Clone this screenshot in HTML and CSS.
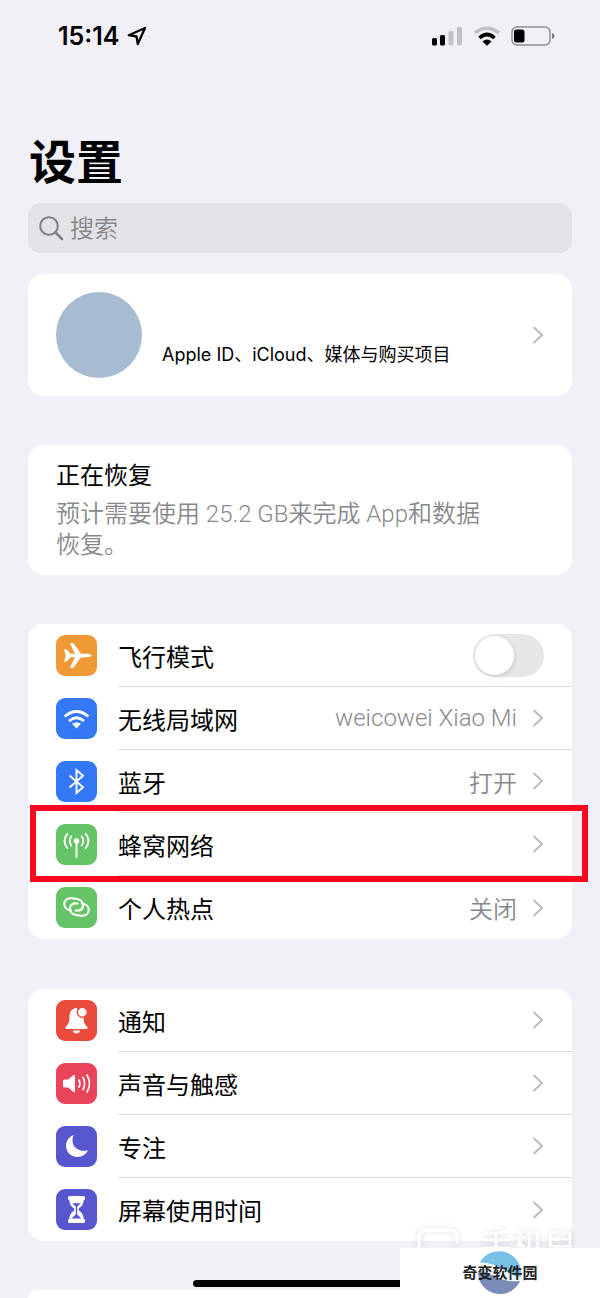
FILE: index.html
```html
<!DOCTYPE html>
<html lang="zh-CN">
<head>
    <meta charset="UTF-8">
    <meta name="viewport" content="width=device-width, initial-scale=1.0">
    <title>设置</title>
    <link rel="stylesheet" href="styles.css">
</head>
<body>
    <svg class="defs" width="0" height="0" aria-hidden="true">
        <symbol id="chevron" viewBox="0 0 12 20">
            <path d="M1.5 2 10 10 1.5 18" fill="none" stroke="currentColor" stroke-width="2"/>
        </symbol>
    </svg>

    <header class="status-bar">
        <span class="time">15:14</span>
        <svg class="location" width="20" height="20" viewBox="0 0 20 20" aria-hidden="true">
            <path d="M18 2 1.8 9.2 9.5 10.5 10.8 18Z" fill="none" stroke="#000" stroke-width="2.3" stroke-linejoin="round"/>
        </svg>
        <div class="indicators">
            <svg width="32" height="20" viewBox="0 0 32 20" aria-hidden="true">
                <rect x="1" y="12" width="5" height="7.5" rx="1.5"/>
                <rect x="9" y="9" width="5" height="10.5" rx="1.5"/>
                <rect x="17.5" y="5" width="5" height="14.5" rx="1.5" fill="#c0c0c5"/>
                <rect x="26" y="1" width="5" height="18.5" rx="1.5" fill="#c0c0c5"/>
            </svg>
            <svg width="28" height="20" viewBox="0 0 28 20" aria-hidden="true">
                <g fill="none" stroke-width="3.6">
                    <path d="M2 7Q14-2.5 26 7" stroke="#c0c0c5"/>
                    <path d="M6.5 12Q14 5 21.5 12" stroke="#000"/>
                </g>
                <path d="M9.5 15.5Q14 11.5 18.5 15.5L14 19.8Z"/>
            </svg>
            <svg width="44" height="20" viewBox="0 0 44 20" aria-hidden="true">
                <rect x="1" y="1" width="38" height="18" rx="5" fill="none" stroke="#8e8e93" stroke-width="1.5"/>
                <rect x="3" y="3.5" width="10.5" height="13" rx="2.5"/>
                <path d="M41 7Q43.5 8 43.5 10T41 13Z" fill="#77777c"/>
            </svg>
        </div>
    </header>

    <main class="settings">
        <h1>设置</h1>

        <label class="search">
            <svg width="26" height="26" viewBox="0 0 26 26" fill="none" stroke="#7f7f84" aria-hidden="true">
                <circle cx="11" cy="11" r="8.8" stroke-width="2"/>
                <path d="M17.5 17.5 24 24" stroke-width="2.6" stroke-linecap="round"/>
            </svg>
            <input type="search" placeholder="搜索" aria-label="搜索">
        </label>

        <a class="card profile" href="#apple-id">
            <span class="avatar"></span>
            <span class="profile-text">Apple ID、iCloud、媒体与购买项目</span>
            <svg class="chevron"><use href="#chevron"/></svg>
        </a>

        <section class="card restore">
            <h2>正在恢复</h2>
            <p>预计需要使用 25.2 GB来完成 App和数据恢复。</p>
        </section>

        <ul class="card list">
            <li>
                <label class="row">
                    <svg class="icon orange" viewBox="0 0 41 41" aria-hidden="true">
                        <path d="M8 14.5H10.6L14.5 18.8H19L14.3 9.2Q14 8 15.2 8H17.3L25 18.8H31.5C34 18.8 35.5 19.8 35.5 20.5S34 22.2 31.5 22.2H25L17.3 33H15.2Q14 33 14.3 31.8L19 22.2H14.5L10.6 26.5H8L9.7 20.5Z"/>
                    </svg>
                    <span class="content">
                        <span class="name">飞行模式</span>
                        <input type="checkbox" class="switch" role="switch">
                    </span>
                </label>
            </li>
            <li>
                <a class="row" href="#wifi">
                    <svg class="icon blue" viewBox="0 0 41 41" aria-hidden="true">
                        <g fill="none" stroke="#fff" stroke-width="2.8">
                            <path d="M8.7 18.5Q20.5 8.5 32.3 18.5"/>
                            <path d="M13 23Q20.5 16.5 28 23"/>
                        </g>
                        <path d="M16 25.8Q20.5 22.5 25 25.8L20.5 30.5Z"/>
                    </svg>
                    <span class="content">
                        <span class="name">无线局域网</span>
                        <span class="value">weicowei Xiao Mi</span>
                        <svg class="chevron"><use href="#chevron"/></svg>
                    </span>
                </a>
            </li>
            <li>
                <a class="row" href="#bluetooth">
                    <svg class="icon blue" viewBox="0 0 41 41" aria-hidden="true">
                        <path d="M13.5 14.5 27 26.2 20.5 32V9L27 14.8 13.5 26.5" fill="none" stroke="#fff" stroke-width="1.9"/>
                    </svg>
                    <span class="content">
                        <span class="name">蓝牙</span>
                        <span class="value">打开</span>
                        <svg class="chevron"><use href="#chevron"/></svg>
                    </span>
                </a>
            </li>
            <li class="highlighted">
                <a class="row" href="#cellular">
                    <svg class="icon green" viewBox="0 0 41 41" aria-hidden="true">
                        <circle cx="20.5" cy="17" r="2.8"/>
                        <g fill="none" stroke="#fff" stroke-width="1.9" stroke-linecap="round">
                            <path d="M20.5 18V33"/>
                            <path d="M15.3 12.3Q12.3 16.8 15.3 21.5M25.7 12.3Q28.7 16.8 25.7 21.5"/>
                            <path d="M11.3 9.8Q5.8 16.8 11.3 24M29.7 9.8Q35.2 16.8 29.7 24"/>
                        </g>
                    </svg>
                    <span class="content">
                        <span class="name">蜂窝网络</span>
                        <svg class="chevron"><use href="#chevron"/></svg>
                    </span>
                </a>
            </li>
            <li>
                <a class="row" href="#hotspot">
                    <svg class="icon green" viewBox="0 0 41 41" aria-hidden="true">
                        <g fill="none" stroke="#fff" stroke-width="2.1" stroke-linecap="round">
                            <path d="M15 23.5C10.500 23 8 20 8.300 16.500 8.700 12.800 12 11 16 11.300L21 12C25 12.800 27.500 15.500 27 19 26.500 22.500 23.500 24 19.500 23.500"/>
                            <path d="M26 16.500C30.500 17 33 20 32.700 23.500 32.300 27.200 29 29 25 28.700L20 28C16 27.200 13.500 24.500 14 21 14.500 17.500 17.500 16 21.500 16.500"/>
                        </g>
                    </svg>
                    <span class="content">
                        <span class="name">个人热点</span>
                        <span class="value">关闭</span>
                        <svg class="chevron"><use href="#chevron"/></svg>
                    </span>
                </a>
            </li>
        </ul>

        <ul class="card list">
            <li>
                <a class="row" href="#notifications">
                    <svg class="icon red" viewBox="0 0 41 41" aria-hidden="true">
                        <path d="M20.5 8C15.5 8.5 13.5 12 13.5 16.5 13.5 22.5 12 24.5 10 26.5 9 27.6 9.3 29 10.8 29H30.2C31.7 29 32 27.6 31 26.5 29 24.5 27.5 22.5 27.5 16.5Z"/>
                        <path d="M16.8 30.5H24.2Q23.4 33.5 20.5 33.5T16.8 30.5Z"/>
                        <circle cx="26.3" cy="12.3" r="5" stroke="#eb4b3d" stroke-width="1.4"/>
                    </svg>
                    <span class="content">
                        <span class="name">通知</span>
                        <svg class="chevron"><use href="#chevron"/></svg>
                    </span>
                </a>
            </li>
            <li>
                <a class="row" href="#sounds">
                    <svg class="icon pink" viewBox="0 0 41 41" aria-hidden="true">
                        <path d="M8.5 16.5H12.2L17.5 12Q19 11.2 19 13V28Q19 29.8 17.5 29L12.2 24.5H8.5Q7 24.5 7 23V18Q7 16.5 8.5 16.5Z"/>
                        <g fill="none" stroke="#fff" stroke-width="1.7" stroke-linecap="round">
                            <path d="M23 17Q25 20.5 23 24"/>
                            <path d="M27 14.5Q30.2 20.5 27 26.5"/>
                            <path d="M31 12Q36 20.5 31 29"/>
                        </g>
                    </svg>
                    <span class="content">
                        <span class="name">声音与触感</span>
                        <svg class="chevron"><use href="#chevron"/></svg>
                    </span>
                </a>
            </li>
            <li>
                <a class="row" href="#focus">
                    <svg class="icon purple" viewBox="0 0 41 41" aria-hidden="true">
                        <path d="M17.5 9C13 11 10 15 10 19.8 10 26 15 31 21.3 31 26 31 30 28.5 32 24.3 24 26.5 16.5 22 16.5 14.5 16.5 12.5 16.8 10.7 17.5 9Z"/>
                    </svg>
                    <span class="content">
                        <span class="name">专注</span>
                        <svg class="chevron"><use href="#chevron"/></svg>
                    </span>
                </a>
            </li>
            <li>
                <a class="row" href="#screen-time">
                    <svg class="icon purple" viewBox="0 0 41 41" aria-hidden="true">
                        <rect x="12" y="7" width="17" height="4" rx="1.5"/>
                        <rect x="12" y="30" width="17" height="4" rx="1.5"/>
                        <path d="M13.3 10H27.7C27.7 15 26 17 23.5 19 22.3 20 22.3 21 23.5 22 26 24 27.7 26 27.7 31H13.3C13.3 26 15 24 17.5 22 18.7 21 18.7 20 17.5 19 15 17 13.3 15 13.3 10Z"/>
                        <path d="M16 14.2H25L21.2 17.5V25.5L25.5 29.5H15.5L19.8 25.5V17.5Z" fill="#5856ce"/>
                    </svg>
                    <span class="content">
                        <span class="name">屏幕使用时间</span>
                        <svg class="chevron"><use href="#chevron"/></svg>
                    </span>
                </a>
            </li>
        </ul>

        <div class="card next-group"></div>
    </main>

    <div class="home-indicator"></div>

    <div class="watermark">
        <svg width="44" height="44" viewBox="0 0 44 44" aria-hidden="true">
            <path d="M3 44V10Q3 2 11 2H33Q41 2 41 10V15" fill="none" stroke="#fff" stroke-width="3"/>
        </svg>
        <span>手机兒</span>
    </div>

    <footer class="site-badge">
        <svg width="46" height="46" viewBox="0 0 46 48" aria-hidden="true">
            <path d="M2 13A23 23 0 0 1 45 23V30C32 26 22 13 2 13Z" fill="#78c0e6"/>
            <path d="M0 22C14 22 24 36 44 32A23 23 0 0 1 1 30Z" fill="#7a8cb8"/>
            <path d="M0 19C16 20 26 33 45 29" fill="none" stroke="#e4f3fa" stroke-width="3"/>
        </svg>
        <span>奇变软件园</span>
    </footer>
</body>
</html>
```
FILE: styles.css
```css
* {
    box-sizing: border-box;
}
body {
    display: flex;
    flex-direction: column;
    margin: 0;
    height: 100vh;
    overflow: hidden;
    background-color: #f1f0f6;
    color: #000;
    font-family: Inter, "Noto Sans CJK SC", sans-serif;
    font-size: 24px;
}
a {
    color: inherit;
    text-decoration: none;
}
.defs {
    position: absolute;
}

/* status bar */
.status-bar {
    display: flex;
    align-items: center;
    height: 72px;
    padding: 0 45px 0 58px;
    flex-shrink: 0;
}
.time {
    font-size: 25px;
    font-weight: 600;
}
.location {
    margin-left: 7px;
}
.indicators {
    display: flex;
    gap: 10px;
    margin-left: auto;
}

.settings {
    display: flex;
    flex-direction: column;
    flex: 1;
    padding: 0 28px;
}
h1 {
    margin: 62px 0 13px 1px;
    font-size: 47px;
    line-height: 56px;
    font-weight: 700;
}

.search {
    display: flex;
    align-items: center;
    gap: 6px;
    height: 50px;
    padding: 0 10px;
    border-radius: 13px;
    background-color: #e3e2e7;
    flex-shrink: 0;
}
.search input {
    flex: 1;
    min-width: 0;
    padding: 0;
    border: none;
    outline: none;
    background: none;
    font: inherit;
    font-weight: 350;
}
.search input::placeholder {
    color: #86868b;
}

.card {
    margin: 0 0 49px;
    border-radius: 16px;
    background-color: #fff;
    flex-shrink: 0;
}
.chevron {
    width: 12px;
    height: 20px;
    color: #bcbcc0;
    flex-shrink: 0;
}

.profile {
    display: flex;
    align-items: center;
    gap: 20px;
    margin-top: 21px;
    padding: 18px 28px;
}
.avatar {
    width: 86px;
    height: 86px;
    border-radius: 50%;
    background-color: #a7bbd1;
}
.profile-text {
    flex: 1;
    padding-top: 36px;
    font-size: 18px;
}

.restore {
    padding: 14px 76px 14px 28px;
}
.restore h2 {
    margin: 0 0 6px;
    font-size: 24px;
    line-height: 34px;
    font-weight: 400;
}
.restore p {
    margin: 0;
    color: #88888c;
    font-family: Roboto, "Noto Sans CJK SC", sans-serif;
    font-weight: 350;
    line-height: 31px;
}

.list {
    padding: 0;
    list-style: none;
}
.list + .list {
    margin-top: 1px;
}
.row {
    display: flex;
    align-items: center;
    gap: 21px;
    height: 63px;
    padding-left: 28px;
}
.content {
    display: flex;
    align-items: center;
    gap: 15px;
    flex: 1;
    height: 100%;
    padding-right: 28px;
    border-bottom: 1px solid #dededf;
}
li:last-child .content {
    border-bottom: none;
}
.name {
    flex: 1;
}
.value {
    color: #88888c;
    font-family: Roboto, "Noto Sans CJK SC", sans-serif;
    font-weight: 350;
}
.icon {
    width: 41px;
    height: 41px;
    border-radius: 9px;
    fill: #fff;
}
.orange {
    background-color: #f09a37;
}
.blue {
    background-color: #3478f6;
}
.green {
    background-color: #65c466;
}
.red {
    background-color: #eb4b3d;
}
.pink {
    background-color: #e9445a;
}
.purple {
    background-color: #5856ce;
}

.switch {
    appearance: none;
    width: 71px;
    height: 43px;
    margin: 0;
    padding: 2px;
    border-radius: 22px;
    background-color: #e6e6e7;
}
.switch::before {
    content: "";
    display: block;
    width: 39px;
    height: 39px;
    border-radius: 50%;
    background-color: #fff;
    box-shadow: 1px 2px 5px rgba(0, 0, 0, 0.1);
}
.switch:checked {
    background-color: #65c466;
}
.switch:checked::before {
    margin-left: auto;
}

/* red frame around the selected row */
.highlighted {
    position: relative;
}
.highlighted::after {
    content: "";
    position: absolute;
    inset: -8px -16px -6px 2px;
    border: 6px solid #fb0820;
    pointer-events: none;
}

.next-group {
    flex: 1;
    margin-bottom: 0;
    border-radius: 16px 16px 0 0;
}

/* overlays */
.home-indicator {
    position: fixed;
    bottom: 11px;
    left: 50%;
    width: 214px;
    height: 7px;
    margin-left: -107px;
    border-radius: 4px;
    background-color: #000;
}
.watermark {
    position: fixed;
    right: 24px;
    bottom: 50px;
    display: flex;
    align-items: flex-start;
    gap: 20px;
    height: 20px;
    overflow: hidden;
    color: #fff;
    font-size: 32px;
    line-height: 36px;
    filter: drop-shadow(0 0 3px rgba(0, 0, 0, 0.15));
}
.site-badge {
    position: fixed;
    right: 0;
    bottom: 0;
    display: grid;
    place-items: center;
    width: 200px;
    height: 50px;
    background-color: #fff;
    font-size: 15px;
    line-height: 20px;
    font-weight: 700;
    color: #222;
}
.site-badge > * {
    grid-area: 1 / 1;
}
```
